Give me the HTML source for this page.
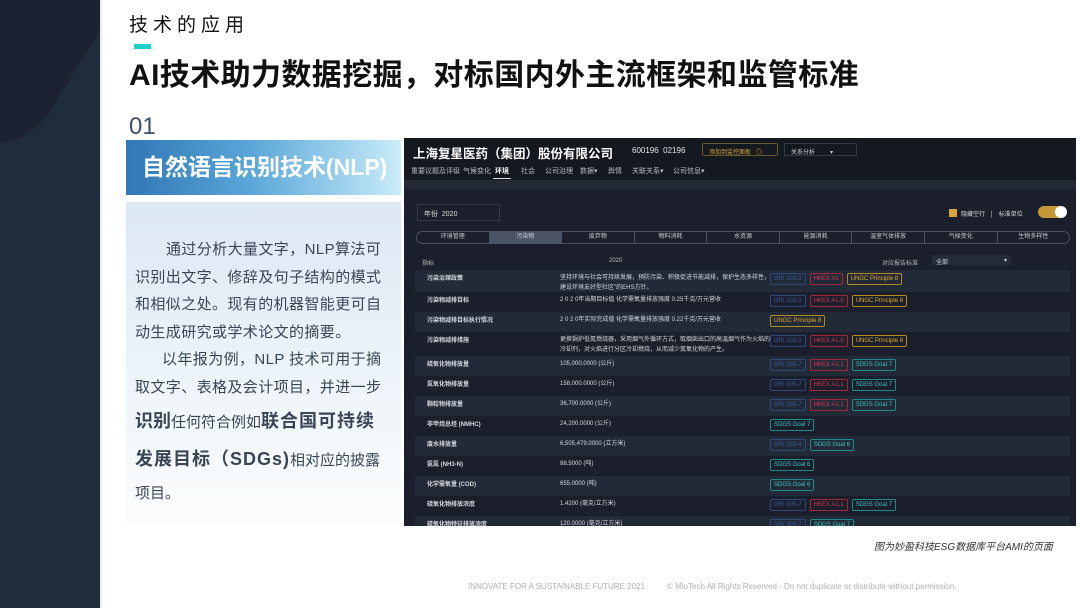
<!DOCTYPE html>
<html><head><meta charset="utf-8"><style>
*{margin:0;padding:0;box-sizing:border-box}
body{width:1080px;height:608px;background:#fff;position:relative;overflow:hidden;font-family:"Liberation Sans","Noto Sans CJK SC",sans-serif}
.abs{position:absolute}
.scr{left:404px;top:138px;width:672px;height:388px;background:#1a1f2b;overflow:hidden;font-size:6px;color:#d6d9de}
.row{position:absolute;left:11px;width:655px;height:20px}
.row.a{background:#222a37}
.row>span{position:absolute;top:3px}
.n{left:12px;font-weight:bold}
.v{left:145px;line-height:10px;width:210px}
.tags{left:355px;display:flex;gap:4px}
.t{border:1px solid;border-radius:2px;padding:2px 3px;font-size:6px;white-space:nowrap;font-style:normal}
.g{border-color:#2b4a80;color:#3a5a9a}
.h{border-color:#a3283a;color:#d8384e}
.u{border-color:#b58a1e;color:#e0aa2a}
.s{border-color:#1f8a8a;color:#38c4c4}
.seg{left:12px;top:93px;width:654px;height:13px;border:1px solid #4a5160;border-radius:7px;display:flex}
.seg div{flex:1;border-right:1px solid #4a5160;text-align:center;line-height:11px;font-size:6px;color:#c8ccd2}
.seg div:last-child{border-right:none}
.nav{position:absolute;top:28px;font-size:7px;color:#b8bcc4;white-space:nowrap}
.txt div{white-space:nowrap}
</style></head><body>
<svg class="abs" style="left:0;top:0" width="100" height="608"><rect width="100" height="608" fill="#1f2c3b"/><path d="M0 0H100V30L60 95Q45 125 20 138Q10 142 0 142Z" fill="#1c2231"/></svg>
<div class="abs" style="left:100px;top:0;width:2px;height:608px;background:#e8ebef"></div>
<div class="abs" style="left:129px;top:10px;font-size:19px;letter-spacing:5px;color:#111">技术的应用</div>
<div class="abs" style="left:134px;top:44px;width:17px;height:5px;background:#1fd1c8"></div>
<div class="abs" style="left:129px;top:50px;font-size:30px;font-weight:bold;color:#111;letter-spacing:0.4px;white-space:nowrap">AI技术助力数据挖掘，对标国内外主流框架和监管标准</div>
<div class="abs" style="left:129px;top:113px;font-size:24px;color:#3d5068">01</div>
<div class="abs" style="left:126px;top:140px;width:275px;height:55px;background:linear-gradient(90deg,#2f77b6,#5aa6d8 45%,#c9ecf8);color:#fff;font-size:23px;font-weight:bold;line-height:55px;padding-left:16px">自然语言识别技术(NLP)</div>
<div class="abs txt" style="left:126px;top:202px;width:275px;height:322px;background:linear-gradient(180deg,#dce8f4,#fafcfd 95%);padding:34px 0 0 9px;font-size:15px;line-height:27.5px;color:#3a4656">
<div style="padding-left:31px;letter-spacing:0.4px">通过分析大量文字，NLP算法可</div>
<div style="letter-spacing:0.4px">识别出文字、修辞及句子结构的模式</div>
<div style="letter-spacing:0.4px">和相似之处。现有的机器智能更可自</div>
<div style="letter-spacing:0.4px">动生成研究或学术论文的摘要。</div>
<div style="padding-left:27px;letter-spacing:0.4px">以年报为例，NLP 技术可用于摘</div>
<div style="letter-spacing:0.4px">取文字、表格及会计项目，并进一步</div>
<div style="line-height:37px;margin-top:2px"><b style="font-size:18px">识别</b>任何符合例如<b style="font-size:18px;letter-spacing:1px">联合国可持续</b></div>
<div style="line-height:37px"><b style="font-size:18px;letter-spacing:1px">发展目标（SDGs)</b>相对应的披露</div>
<div style="line-height:30px">项目。</div>
</div>
<div class="abs scr">
<div class="abs" style="left:0;top:0;width:672px;height:42px;background:#14181f"></div>
<div class="abs" style="left:9px;top:5px;font-size:12.5px;font-weight:bold;color:#fff">上海复星医药（集团）股份有限公司</div>
<div class="abs" style="left:228px;top:8px;font-size:8px;color:#e6e6e6">600196&nbsp; 02196</div>
<div class="abs" style="left:298px;top:5px;width:76px;height:13px;border:1px solid #6a5a2a;border-radius:2px;font-size:6px;color:#d8a43a;padding:3px 6px">添加到监控面板 &nbsp; ◎</div>
<div class="abs" style="left:380px;top:5px;width:73px;height:13px;border:1px solid #333a46;font-size:6px;color:#ccc;padding:3px 6px">关系分析 &nbsp; &nbsp; &nbsp; &nbsp; ▾</div>
<div class="nav" style="left:7px">重要议题及评级</div>
<div class="nav" style="left:59px">气候变化</div>
<div class="nav" style="left:91px;color:#fff;font-weight:bold">环境</div>
<div class="nav" style="left:117px">社会</div>
<div class="nav" style="left:141px">公司治理</div>
<div class="nav" style="left:176px">数据▾</div>
<div class="nav" style="left:204px">舆情</div>
<div class="nav" style="left:228px">关联关系▾</div>
<div class="nav" style="left:269px">公司信息▾</div>
<div class="abs" style="left:89px;top:40px;width:18px;height:1px;background:#ddd"></div>
<div class="abs" style="left:0;top:42px;width:672px;height:9px;background:#232a36"></div>
<div class="abs" style="left:13px;top:66px;width:83px;height:17px;border:1px solid #333a46;font-size:7px;padding:4px 6px;color:#ddd">年份&nbsp; 2020</div>
<div class="abs" style="left:545px;top:71px;width:8px;height:8px;background:#d8a43a"></div>
<div class="abs" style="left:557px;top:71px;font-size:6px">隐藏空行 &nbsp; │ &nbsp; 标准单位</div>
<div class="abs" style="left:634px;top:68px;width:28px;height:12px;border-radius:6px;background:#c49a36"></div>
<div class="abs" style="left:651px;top:68px;width:12px;height:12px;border-radius:6px;background:#fff"></div>
<div class="abs seg"><div>环境管理</div><div style="background:#4a5466">污染物</div><div>废弃物</div><div>物料消耗</div><div>水资源</div><div>能源消耗</div><div>温室气体排放</div><div>气候变化</div><div>生物多样性</div></div>
<div class="abs" style="left:18px;top:120px;color:#bbb">指标</div>
<div class="abs" style="left:205px;top:120px;color:#bbb">2020</div>
<div class="abs" style="left:478px;top:120px;color:#bbb">对应报告标准</div>
<div class="abs" style="left:528px;top:117px;width:79px;height:10px;background:#252c38;padding:2px 4px">全部 <span style="float:right">▾</span></div>

<div class="row a" style="top:132px;height:22px"><span class="n">污染治理政策</span><span class="v">坚持环境与社会可持续发展，预防污染、积极促进节能减排，保护生态多样性，建设环境友好型社区"的EHS方针。</span><span class="tags"><i class="t g">GRI 103-2</i><i class="t h">HKEX A1</i><i class="t u">UNGC Principle 8</i></span></div>
<div class="row" style="top:154px"><span class="n">污染物减排目标</span><span class="v" style="width:230px">2 0 2 0年当期目标值 化学需氧量排放强度 0.25千克/万元营收</span><span class="tags"><i class="t g">GRI 103-2</i><i class="t h">HKEX A1.5</i><i class="t u">UNGC Principle 8</i></span></div>
<div class="row a" style="top:174px"><span class="n">污染物减排目标执行情况</span><span class="v" style="width:230px">2 0 2 0年实际完成值 化学需氧量排放强度 0.22千克/万元营收</span><span class="tags"><i class="t u">UNGC Principle 8</i></span></div>
<div class="row" style="top:194px;height:24px"><span class="n">污染物减排措施</span><span class="v">更换锅炉低氮燃烧器，采用烟气外循环方式，取烟囱出口的高温烟气作为火焰的冷却剂，对火焰进行分区冷却燃烧，从而减少氮氧化物的产生。</span><span class="tags"><i class="t g">GRI 103-2</i><i class="t h">HKEX A1.5</i><i class="t u">UNGC Principle 8</i></span></div>
<div class="row a" style="top:218px"><span class="n">硫氧化物排放量</span><span class="v">105,000.0000 (公斤)</span><span class="tags"><i class="t g">GRI 305-7</i><i class="t h">HKEX A1.1</i><i class="t s">SDGS Goal 7</i></span></div>
<div class="row" style="top:238px"><span class="n">氮氧化物排放量</span><span class="v">158,000.0000 (公斤)</span><span class="tags"><i class="t g">GRI 305-7</i><i class="t h">HKEX A1.1</i><i class="t s">SDGS Goal 7</i></span></div>
<div class="row a" style="top:258px"><span class="n">颗粒物排放量</span><span class="v">36,700.0000 (公斤)</span><span class="tags"><i class="t g">GRI 305-7</i><i class="t h">HKEX A1.1</i><i class="t s">SDGS Goal 7</i></span></div>
<div class="row" style="top:278px"><span class="n">非甲烷总烃 (NMHC)</span><span class="v">24,200.0000 (公斤)</span><span class="tags"><i class="t s">SDGS Goal 7</i></span></div>
<div class="row a" style="top:298px"><span class="n">废水排放量</span><span class="v">6,505,479.0000 (立方米)</span><span class="tags"><i class="t g">GRI 303-4</i><i class="t s">SDGS Goal 6</i></span></div>
<div class="row" style="top:318px"><span class="n">氨氮 (NH3-N)</span><span class="v">88.5000 (吨)</span><span class="tags"><i class="t s">SDGS Goal 6</i></span></div>
<div class="row a" style="top:338px"><span class="n">化学需氧量 (COD)</span><span class="v">655.0000 (吨)</span><span class="tags"><i class="t s">SDGS Goal 6</i></span></div>
<div class="row" style="top:358px"><span class="n">硫氧化物排放浓度</span><span class="v">1.4200 (毫克/立方米)</span><span class="tags"><i class="t g">GRI 305-7</i><i class="t h">HKEX A1.1</i><i class="t s">SDGS Goal 7</i></span></div>
<div class="row a" style="top:378px"><span class="n">硫氧化物特征排放浓度</span><span class="v">120.0000 (毫克/立方米)</span><span class="tags"><i class="t g">GRI 305-7</i><i class="t s">SDGS Goal 7</i></span></div>
</div>
<div class="abs" style="left:874px;top:538px;font-size:10px;font-style:italic;color:#333">图为妙盈科技ESG数据库平台AMI的页面</div>
<div class="abs" style="left:468px;top:582px;font-size:8px;color:#b0b0b0">INNOVATE FOR A SUSTAINABLE FUTURE 2021</div>
<div class="abs" style="left:667px;top:582px;font-size:8px;color:#b0b0b0">© MioTech All Rights Reserved - Do not duplicate or distribute without permission.</div>
</body></html>
